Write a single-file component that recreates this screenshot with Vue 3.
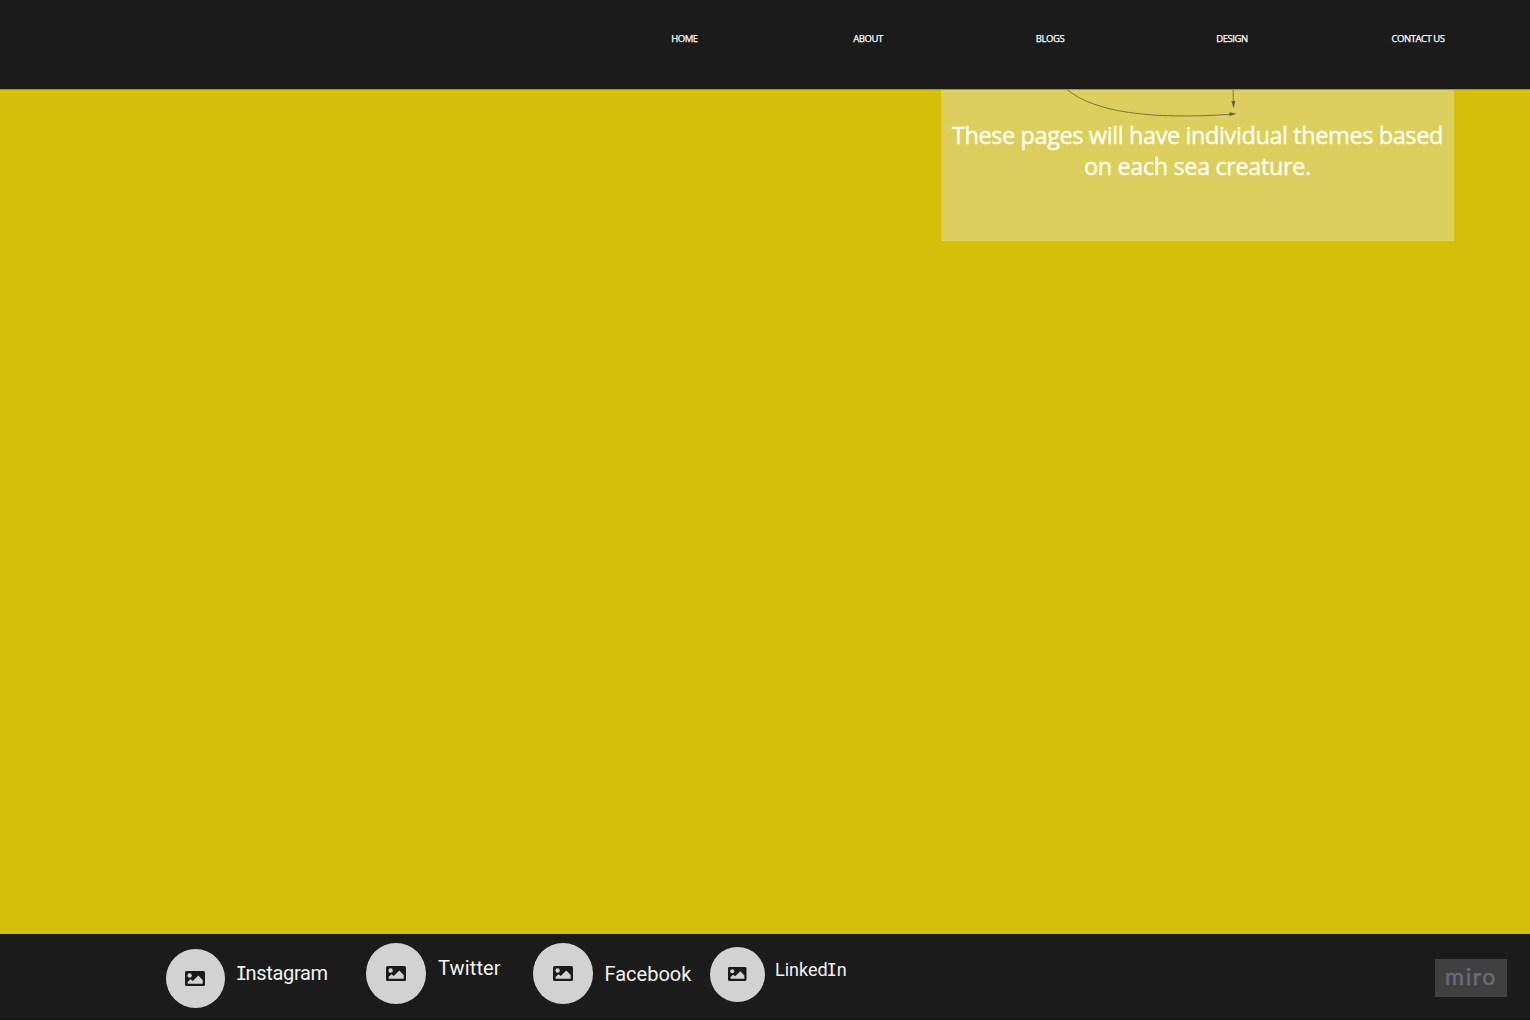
<script setup>
const links = ['HOME', 'ABOUT', 'BLOGS', 'DESIGN', 'CONTACT US']
const socials = [
  { id: 'instagram', parts: ['', 'I', 'nstagram'] },
  { id: 'twitter', parts: ['Twitter', '', ''] },
  { id: 'facebook', parts: ['Facebook', '', ''] },
  { id: 'linkedin', parts: ['Linked', 'I', 'n'] },
]
</script>

<template>
  <div class="page">
    <nav class="nav">
      <a v-for="link in links" :key="link" class="link"><span>{{ link }}</span></a>
    </nav>
    <main class="main">
      <section class="card">
        <svg class="arrows" width="513" height="30" viewBox="0 0 513 30">
          <path d="M125.500 -1C152 22 210 30 290 24.200M292.200 -1V13" fill="none" stroke="#7c7440" stroke-width="1" />
          <path d="M290.400 11h4l-1.800 7.500zM288.500 22.200l7 1.500-7 2.400z" fill="#665f48" />
        </svg>
        <p class="copy"><span class="line">These pages will have individual themes based</span><span class="line">on each sea creature.</span></p>
      </section>
    </main>
    <footer class="footer">
      <div v-for="s in socials" :key="s.id" class="social" :class="s.id">
        <div class="circle">
          <svg class="picture" viewBox="0 0 20 15">
            <rect width="20" height="15" rx="1.500" fill="#1a1a1a" />
            <circle cx="4.600" cy="4.500" r="2.200" fill="#d2d2d2" />
            <path d="M2.700 12.700V10.700L5.500 8.200 7.800 10 13.300 4.500 17.700 9V12.700Z" fill="#d2d2d2" />
          </svg>
        </div>
        <span class="label">{{ s.parts[0] }}<span v-if="s.parts[1]" class="slab">{{ s.parts[1] }}</span>{{ s.parts[2] }}</span>
      </div>
      <div class="miro"><span>miro</span></div>
    </footer>
  </div>
</template>

<style>
body { margin: 0; background: #1a1a1a; }
</style>

<style scoped>
.page { width: 1530px; height: 1020px; display: flex; flex-direction: column; overflow: hidden; background: #d5bf08; }
.nav { box-sizing: border-box; height: 89px; flex: none; padding: 32px 0 0 593px; background: #1b1b1b; display: grid; grid-template-columns: 183px 184px 180px 184px 188px; }
.link { text-align: center; color: #fff; font: 9.5px/14px "Open Sans", sans-serif; letter-spacing: -0.45px; white-space: nowrap; -webkit-text-stroke: 0.25px #fff; }
.main { box-sizing: border-box; height: 845px; flex: none; border-top: 1px solid #a09322; }
.card { box-sizing: border-box; width: 513.500px; height: 151px; margin-left: 940.700px; background: #dccf5e; }
.arrows { display: block; }
.copy { margin: 0; color: #fffff4; font: 23.5px/31px "Open Sans", sans-serif; text-align: center; white-space: nowrap; -webkit-text-stroke: 0.35px #fffff4; }
.line { display: block; letter-spacing: -0.4px; }
.footer { box-sizing: border-box; height: 86px; flex: none; background: #1b1b1b; border-bottom: 1px solid #121212; display: flex; align-items: flex-start; padding-left: 165.500px; }
.social { display: flex; align-items: flex-start; flex: none; }
.circle { flex: none; width: 60px; height: 60px; border-radius: 50%; background: #d2d2d2; display: flex; align-items: center; justify-content: center; }
.picture { width: 20px; height: 15px; display: block; }
.label { color: #f4f4f4; font: 20px/28px Roboto, sans-serif; white-space: nowrap; }
.slab { font-family: "DejaVu Sans Mono", monospace; font-size: 0.97em; margin: 0 -0.07em 0 -0.1em; }
.instagram { width: 200.500px; padding-top: 15px; }
.instagram .circle { width: 59px; height: 59px; }
.instagram .label { margin: 10px 0 0 13px; letter-spacing: -0.32px; }
.twitter { width: 167px; padding-top: 9px; }
.twitter .circle { height: 60.500px; }
.twitter .label { margin: 11px 0 0 12px; letter-spacing: 0.15px; }
.facebook { width: 177px; padding-top: 9px; }
.facebook .circle { height: 60.500px; }
.facebook .label { margin: 17px 0 0 11.500px; }
.linkedin { width: 725px; padding-top: 12.500px; }
.linkedin .circle { width: 55px; height: 55px; }
.linkedin .picture { width: 18.500px; height: 14px; }
.linkedin .label { font-size: 18px; margin: 9.500px 0 0 10px; }
.linkedin .slab { margin: 0 -0.02em 0 -0.06em; }
.miro { flex: none; width: 72px; height: 38px; margin-top: 25px; background: #404041; color: #6b6974; font: 400 23px/35px Lato, sans-serif; letter-spacing: 1.600px; text-align: center; -webkit-text-stroke: 0.6px #6b6974; }
</style>
